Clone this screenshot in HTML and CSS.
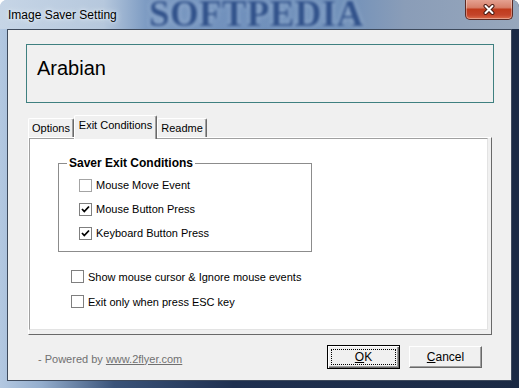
FILE: index.html
```html
<!DOCTYPE html>
<html lang="en">
<head>
    <meta charset="UTF-8">
    <meta name="viewport" content="width=device-width, initial-scale=1.0">
    <link rel="stylesheet" href="styles.css">
</head>
<body>
    <div class="window">
        <div class="titlebar">
            <span class="title">Image Saver Setting</span>
            <span class="watermark">SOFTPEDIA</span>
            <button class="close" aria-label="Close">
                <svg width="14" height="11" viewBox="0 0 14 11">
                    <path d="M3.5 2 L10.5 9 M10.5 2 L3.5 9" stroke="#4a1c14" stroke-width="4" stroke-linecap="round"/>
                    <path d="M3.5 2 L10.5 9 M10.5 2 L3.5 9" stroke="#fff" stroke-width="2" stroke-linecap="round"/>
                </svg>
            </button>
        </div>

        <div class="client">
            <div class="banner">Arabian</div>

            <div class="tabs">
                <div class="tab tab-options">Options</div>
                <div class="tab tab-exit active">Exit Conditions</div>
                <div class="tab tab-readme">Readme</div>
            </div>

            <div class="panel">
                <div class="page">
                    <fieldset class="group">
                        <legend>Saver Exit Conditions</legend>
                        <label class="check"><span class="box light"></span>Mouse Move Event</label>
                        <label class="check"><span class="box"><svg width="9" height="9" viewBox="0 0 9 9"><polyline points="1,4 3.3,6.5 8,1.5" fill="none" stroke="#000" stroke-width="1.8"/></svg></span>Mouse Button Press</label>
                        <label class="check"><span class="box"><svg width="9" height="9" viewBox="0 0 9 9"><polyline points="1,4 3.3,6.5 8,1.5" fill="none" stroke="#000" stroke-width="1.8"/></svg></span>Keyboard Button Press</label>
                    </fieldset>

                    <div class="options">
                        <label class="check"><span class="box"></span>Show mouse cursor &amp; Ignore mouse events</label>
                        <label class="check"><span class="box"></span>Exit only when press ESC key</label>
                    </div>
                </div>
            </div>

            <div class="footer">
                <span class="powered">- Powered by <a href="#">www.2flyer.com</a></span>
                <button class="btn default"><span class="focus"><u>O</u>K</span></button>
                <button class="btn"><u>C</u>ancel</button>
            </div>
        </div>
    </div>
</body>
</html>
```

FILE: styles.css
```css
body {
    margin: 0;
    background: #fff;
}

.window {
    width: 519px;
    height: 388px;
    box-sizing: border-box;
    display: flex;
    flex-direction: column;
    overflow: hidden;
    border-radius: 7px 7px 0 0;
    background: linear-gradient(90deg, #b3c8e1 0%, #93adcd 8%, #3a5379 22%, #1f3050 45%, #1b2a44 100%);
    font-family: "Liberation Sans", Arial, sans-serif;
    font-size: 11px;
    color: #000;
}

/* title bar */
.titlebar {
    height: 29px;
    flex: none;
    display: flex;
    align-items: flex-start;
    position: relative;
    overflow: hidden;
    background: linear-gradient(90deg, #c6d5e6 0%, #b6c8dd 20%, #7e9cc3 28%, #7090bc 45%, #7191ba 66%, #8a9db8 78%, #97a7bc 100%);
}

.title {
    position: relative;
    z-index: 1;
    padding: 8px 0 0 8px;
    font-size: 12px;
    line-height: 14px;
    text-shadow: 0 0 6px #e8f0f8, 0 0 3px #e8f0f8;
}

.watermark {
    position: absolute;
    left: 149px;
    top: 0;
    font-family: "Liberation Serif", serif;
    font-weight: bold;
    font-size: 37px;
    line-height: 28px;
    letter-spacing: 0.3px;
    color: #2f5089;
    text-shadow: 0 0 4px #b2c8e2;
    filter: blur(1.4px);
}

.close {
    margin: -1px 6px 0 auto;
    width: 48px;
    height: 21px;
    padding: 0;
    position: relative;
    z-index: 1;
    display: flex;
    align-items: center;
    justify-content: center;
    border: 1px solid #5e2a22;
    border-top: none;
    border-radius: 0 0 5px 5px;
    background: linear-gradient(#e6a595 0%, #d7806a 42%, #c03b1c 52%, #c4442a 80%, #dc6e4c 100%);
    box-shadow: inset 0 0 0 1px rgba(255, 255, 255, 0.35);
}

/* client area */
.client {
    flex: 1;
    margin: 0 7px 7px 7px;
    border: 1px solid #3e4a5c;
    background: #f0f0f0;
    display: flex;
    flex-direction: column;
}

.banner {
    margin: 14px 0 0 18px;
    width: 468px;
    height: 59px;
    box-sizing: border-box;
    border: 1px solid #3f8080;
    padding: 11px 0 0 10px;
    font-size: 20px;
    line-height: 24px;
}

/* tabs */
.tabs {
    display: flex;
    align-items: flex-end;
    height: 22px;
    margin: 12px 0 0 20px;
    position: relative;
    z-index: 1;
}

.tab {
    height: 19px;
    box-sizing: border-box;
    border: 1px solid;
    border-color: #fff #696969 transparent #fff;
    border-bottom: none;
    border-radius: 2px 2px 0 0;
    box-shadow: inset -1px 0 #a0a0a0;
    background: #f0f0f0;
    text-align: center;
    line-height: 18px;
}

.tab-options { width: 46px; }
.tab-exit { width: 83px; }
.tab-readme { width: 50px; }

.tab.active {
    height: 24px;
    margin-bottom: -2px;
    line-height: 19px;
}

.panel {
    margin-left: 20px;
    width: 464px;
    height: 198px;
    box-sizing: border-box;
    border: 1px solid;
    border-color: #fff #696969 #696969 #fff;
    padding: 0 3px 4px 0;
    background: #f0f0f0;
}

.page {
    height: 100%;
    box-sizing: border-box;
    border: 1px solid;
    border-color: #a0a0a0 #e3e3e3 #e3e3e3 #a0a0a0;
    background: #fff;
    padding: 18px 0 0 28px;
}

/* group box */
.group {
    margin: 0;
    width: 254px;
    height: 95px;
    box-sizing: border-box;
    border: 1px solid #8c8c8c;
    padding: 3px 0 0 0;
}

.group legend {
    margin-left: 8px;
    padding: 0 2px;
    font-weight: bold;
    font-size: 12px;
    line-height: 13px;
}

.group .check {
    margin-left: 20px;
}

.check {
    display: flex;
    align-items: center;
    gap: 4px;
    height: 24px;
}

.box {
    width: 13px;
    height: 13px;
    box-sizing: border-box;
    border: 1px solid #7f7f7f;
    background: #fff;
    display: flex;
    align-items: center;
    justify-content: center;
}

.box.light {
    border-color: #a4a4a4;
}

.options {
    margin: 12px 0 0 13px;
}

.options .check {
    height: 25px;
}

/* footer */
.footer {
    display: flex;
    align-items: center;
    gap: 9px;
    height: 24px;
    margin: 10px 29px 0 30px;
}

.powered {
    margin-right: auto;
    padding-top: 3px;
    color: #707070;
}

.powered a {
    color: #707070;
}

.btn {
    width: 73px;
    height: 22px;
    padding: 0;
    box-sizing: border-box;
    border: 1px solid;
    border-color: #fff #696969 #696969 #fff;
    box-shadow: inset -1px -1px #a0a0a0;
    background: #f0f0f0;
    font-family: "Liberation Sans", Arial, sans-serif;
    font-size: 12px;
    color: #000;
}

.btn.default {
    height: 24px;
    border-color: #000;
    box-shadow: inset 1px 1px #fff, inset -1px -1px #696969, inset -2px -2px #a0a0a0;
    display: flex;
    padding: 3px;
}

.focus {
    flex: 1;
    border: 1px dotted #000;
    display: flex;
    align-items: center;
    justify-content: center;
}
```
